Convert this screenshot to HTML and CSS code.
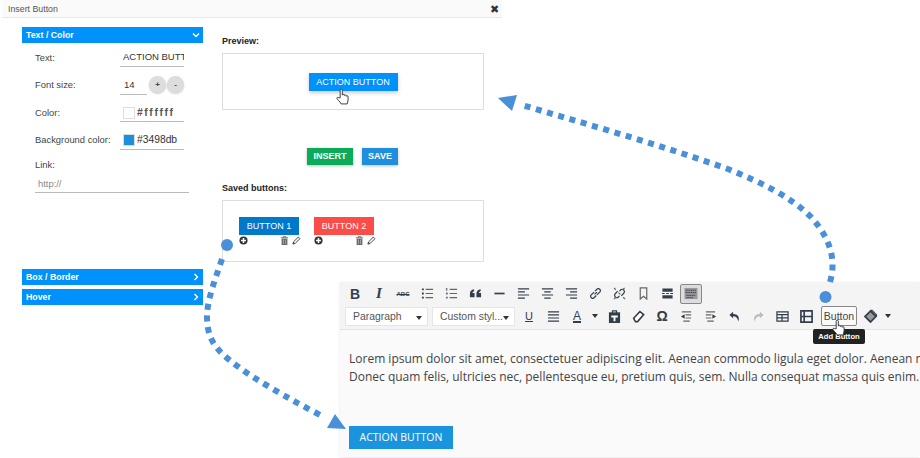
FILE: index.html
```html
<!DOCTYPE html>
<html lang="en">
<head>
    <meta charset="UTF-8">
    <title>Insert Button</title>
    <link rel="stylesheet" href="styles.css">
</head>
<body>
    <svg class="defs" width="0" height="0">
        <symbol id="hand" viewBox="0 0 14 18">
            <path d="M4.500 10.500V2.300C4.500 .6 6.800 .6 6.800 2.300V7.500C6.800 6.300 9 6.300 9 7.600V8C9 6.900 11 6.900 11 8.200V8.700C11 7.800 13 7.800 13 9.200V12.500C13 14.500 12.300 15.400 12 17H5.500C5 15.500 3.800 14.400 2.600 13.200L1.200 11.500C.4 10.300 1.800 9.300 2.900 10.200Z" fill="#fff" stroke="#333" stroke-width="1"/>
        </symbol>
        <symbol id="plus-circle" viewBox="0 0 10 10">
            <circle cx="5" cy="5" r="4.500" fill="#333"/>
            <path d="M5 2.300V7.700M2.300 5H7.700" stroke="#fff" stroke-width="1.700"/>
        </symbol>
        <symbol id="trash" viewBox="0 0 10 10">
            <path d="M1 2H9M3.500 2V.8H6.500V2" stroke="#666" fill="none"/>
            <path d="M1.800 3H8.200V10H1.800Z" fill="#666"/>
            <path d="M3.800 4V9M6.200 4V9" stroke="#ccc" stroke-width=".7"/>
        </symbol>
        <symbol id="pencil" viewBox="0 0 10 10">
            <path d="M1 9L1.700 6.500L7 1.200L8.800 3L3.500 8.300Z" fill="#fff" stroke="#444" stroke-width="1.100"/>
            <path d="M1 9L1.700 6.500L3.500 8.300Z" fill="#444"/>
        </symbol>
    </svg>

    <div class="dialog">
        <div class="dialog-title">
            <span>Insert Button</span>
            <span class="dialog-close">✖</span>
        </div>
        <div class="dialog-body">
            <div class="sidebar">
                <div class="acc-head">
                    <span>Text / Color</span>
                    <svg class="chev" viewBox="0 0 8 8"><path d="M1 2.500L4 5.500L7 2.500" /></svg>
                </div>
                <div class="acc-panel">
                    <div class="field">
                        <label>Text:</label>
                        <div class="value value-text">ACTION BUTT</div>
                    </div>
                    <div class="field">
                        <label>Font size:</label>
                        <div class="value value-size">14</div>
                        <span class="round-btn">+</span>
                        <span class="round-btn">-</span>
                    </div>
                    <div class="field">
                        <label>Color:</label>
                        <div class="value value-color"><i class="swatch swatch-white"></i><span class="mono">#ffffff</span></div>
                    </div>
                    <div class="field">
                        <label>Background color:</label>
                        <div class="value value-color"><i class="swatch swatch-blue"></i><span>#3498db</span></div>
                    </div>
                    <div class="link-label">Link:</div>
                    <div class="link-input">http://</div>
                </div>
                <div class="acc-head">
                    <span>Box / Border</span>
                    <svg class="chev" viewBox="0 0 8 8"><path d="M2.500 1L5.500 4L2.500 7" /></svg>
                </div>
                <div class="acc-head acc-last">
                    <span>Hover</span>
                    <svg class="chev" viewBox="0 0 8 8"><path d="M2.500 1L5.500 4L2.500 7" /></svg>
                </div>
            </div>

            <div class="main">
                <h4 class="block-title">Preview:</h4>
                <div class="preview-box">
                    <div class="preview-btn">ACTION BUTTON
                        <svg class="hand hand-preview"><use href="#hand"/></svg>
                    </div>
                </div>
                <div class="actions">
                    <span class="act act-insert">INSERT</span>
                    <span class="act act-save">SAVE</span>
                </div>
                <h4 class="block-title saved-title">Saved buttons:</h4>
                <div class="saved-box">
                    <div class="saved-item">
                        <div class="saved-btn saved-blue">BUTTON 1</div>
                        <div class="saved-tools">
                            <svg><use href="#plus-circle"/></svg>
                            <svg class="push"><use href="#trash"/></svg>
                            <svg><use href="#pencil"/></svg>
                        </div>
                    </div>
                    <div class="saved-item">
                        <div class="saved-btn saved-red">BUTTON 2</div>
                        <div class="saved-tools">
                            <svg><use href="#plus-circle"/></svg>
                            <svg class="push"><use href="#trash"/></svg>
                            <svg><use href="#pencil"/></svg>
                        </div>
                    </div>
                </div>
            </div>
        </div>
    </div>

    <div class="editor">
        <div class="toolbar">
            <div class="tb-row">
                <span class="tb tb-b">B</span>
                <span class="tb tb-i">I</span>
                <span class="tb tb-abc">ABC</span>
                <span class="tb"><svg viewBox="0 0 14 14"><path d="M5 2.500H13M5 7H13M5 11.500H13" class="ln dim"/><path d="M1 1.500H3V3.500H1ZM1 6H3V8H1ZM1 10.500H3V12.500H1Z" class="fl"/></svg></span>
                <span class="tb"><svg viewBox="0 0 14 14"><path d="M5 2.500H13M5 7H13M5 11.500H13" class="ln dim"/><path d="M1 1H2.500V4H1ZM1 6H3V8H1ZM1 10.500H3V12.500H1Z" class="fl thin"/></svg></span>
                <span class="tb"><svg viewBox="0 0 14 14"><path d="M1 7.500C1 4.500 2.500 3 5.500 2.500V4.500C4.500 4.800 3.700 5.500 3.700 6.500H6V11H1ZM8 7.500C8 4.500 9.500 3 12.500 2.500V4.500C11.500 4.800 10.700 5.500 10.700 6.500H13V11H8Z" class="fl"/></svg></span>
                <span class="tb"><svg viewBox="0 0 14 14"><path d="M1.500 7H12.500" class="ln thick"/></svg></span>
                <span class="tb"><svg viewBox="0 0 14 14"><path d="M1 2H13M1 5.300H8.500M1 8.600H13M1 12H8.500" class="ln"/></svg></span>
                <span class="tb"><svg viewBox="0 0 14 14"><path d="M1 2H13M3.500 5.300H10.500M1 8.600H13M3.500 12H10.500" class="ln"/></svg></span>
                <span class="tb"><svg viewBox="0 0 14 14"><path d="M1 2H13M5.500 5.300H13M1 8.600H13M5.500 12H13" class="ln"/></svg></span>
                <span class="tb"><svg viewBox="0 0 14 14"><path d="M6 8L8.500 5.500M5.500 5.500L2.200 8.800C.5 10.500 3.500 13.500 5.200 11.800L7.800 9.200M6.500 4.500L8.800 2.200C10.500 .5 13.500 3.500 11.800 5.200L8.500 8.500" class="ln"/></svg></span>
                <span class="tb"><svg viewBox="0 0 14 14"><path d="M5 4.500L2.200 7.500C.5 9.500 3.500 13 5.500 11L7 9.500M9 9.500L11.800 6.500C13.500 4.500 10.500 1 8.500 3L7 4.500" class="ln"/><path d="M1 1L3 3M13 13L11 11M1 13L3 11M12.500 1L10.500 3M6 6L8 8" class="ln dim"/></svg></span>
                <span class="tb"><svg viewBox="0 0 14 14"><path d="M3.500 1H10.500V13L7 10L3.500 13Z" class="ln dim"/></svg></span>
                <span class="tb"><svg viewBox="0 0 14 14"><path d="M1.500 1.500H12.500V5H1.500ZM1.500 9H12.500V12.500H1.500Z" class="fl"/><path d="M1 7H4M5.500 7H8.500M10 7H13" class="ln"/></svg></span>
                <span class="tb tb-on"><svg viewBox="0 0 16 14"><path d="M1 1H15V13H1Z" class="fl mid"/><path d="M2 3.500H14M2 6H14M3 9H13M3 11.500H10" class="ln dash"/></svg></span>
            </div>
            <div class="tb-row tb-row2">
                <span class="sel sel-first">Paragraph<i class="caret"></i></span>
                <span class="sel">Custom styl...<i class="caret"></i></span>
                <span class="tb tb-u">U</span>
                <span class="tb"><svg viewBox="0 0 14 14"><path d="M1 2H13M1 5.300H13M1 8.600H13M1 12H13" class="ln"/></svg></span>
                <span class="tb tb-a">A</span>
                <i class="caret caret-tb"></i>
                <span class="tb tb-paste"><svg viewBox="0 0 14 14"><path d="M1 2.500H13V14H1Z" class="fl"/><path d="M4.800 3.500V1H9.200V3.500" class="ln"/><path d="M3.500 6H10.500V8H8V12H6V8H3.500Z" class="wt"/></svg></span>
                <span class="tb"><svg viewBox="0 0 14 14"><path d="M1.800 9L8.500 1.800L12.500 5L6 12.500H3.800Z" class="ln thick"/><path d="M3 9L8.500 3.200L11 5.200L5.500 11.300H4.200Z" class="wt"/></svg></span>
                <span class="tb tb-omega">Ω</span>
                <span class="tb"><svg viewBox="0 0 14 14"><path d="M2 2H12M6 5.300H12M6 8.600H12M3.500 12H10.500" class="ln dim"/><path d="M1 7L5 4.500V9.500Z" class="fl"/></svg></span>
                <span class="tb"><svg viewBox="0 0 14 14"><path d="M2 2H12M2 5.300H8M2 8.600H8M3.500 12H10.500" class="ln dim"/><path d="M13 7L9 4.500V9.500Z" class="fl"/></svg></span>
                <span class="tb"><svg viewBox="0 0 14 14"><path d="M5.500 2L1.500 5.500L5.500 9V6.800C8.500 6.800 10.500 8.500 11 12.500C13 7.500 10.500 4.300 5.500 4.300Z" class="fl"/></svg></span>
                <span class="tb"><svg viewBox="0 0 14 14"><path d="M8.500 2L12.500 5.500L8.500 9V6.800C5.500 6.800 3.500 8.500 3 12.500C1 7.500 3.500 4.300 8.500 4.300Z" class="fl light"/></svg></span>
                <span class="tb"><svg viewBox="0 0 14 14"><path d="M1 2H13V12H1ZM1 5H13M1 8.500H13M6.500 5V12" class="ln"/></svg></span>
                <span class="tb tb-film"><svg viewBox="0 0 14 14"><path d="M1 1H13V13H1ZM1 7H13M4.500 1V13" class="ln thick"/></svg></span>
                <span class="tb-text">Button
                    <svg class="hand hand-bar"><use href="#hand"/></svg>
                    <span class="tooltip">Add Button</span>
                </span>
                <span class="tb tb-tags"><svg viewBox="0 0 16 16"><path d="M.8 8L8 .8L10 .8L15 6L15 8L8 15.200Z" class="fl"/><path d="M3.500 8L8 3.500L12.500 8L8 12.500Z" class="fl mid"/><path d="M9.500 1.500L14.500 6.500" class="ln dim"/></svg></span>
                <i class="caret caret-tb"></i>
            </div>
        </div>
        <div class="editor-body">
            <p>Lorem ipsum dolor sit amet, consectetuer adipiscing elit. Aenean commodo ligula eget dolor. Aenean massa.</p>
            <p>Donec quam felis, ultricies nec, pellentesque eu, pretium quis, sem. Nulla consequat massa quis enim. Donec.</p>
            <span class="action-btn">ACTION BUTTON</span>
        </div>
    </div>

    <!-- arrows sit over everything -->
    <svg class="arrows" viewBox="0 0 920 458">
        <circle cx="227" cy="245" r="6"/>
        <path class="dots" d="M222 259C215 280 207 300 207 317C207 345 222 355 247 373C270 388 295 402 322 416"/>
        <path d="M335 414L327 428L346 429Z"/>
        <circle cx="825.500" cy="297" r="6"/>
        <path class="dots" d="M830 282C836 262 832 240 811 217C790 196 760 182 728 169C660 145 590 125 522 105"/>
        <path d="M498 98L517 95L512 111Z"/>
    </svg>
</body>
</html>
```

FILE: styles.css
```css
* {
    margin: 0;
    padding: 0;
    box-sizing: border-box;
}

body {
    position: relative;
    width: 920px;
    height: 458px;
    overflow: hidden;
    background: #fff;
    font-family: "Liberation Sans", Arial, sans-serif;
    color: #444;
}

.defs {
    position: absolute;
}

.dialog {
    width: 500px;
    margin-left: 2px;
}

.dialog-title {
    display: flex;
    justify-content: space-between;
    align-items: center;
    height: 18px;
    padding: 0 3px 0 6px;
    background: #fafafa;
    border-bottom: 1px solid #e8e8e8;
    font-size: 8.800px;
    color: #555;
}

.dialog-close {
    font-size: 10.500px;
    color: #333;
}

.dialog-body {
    display: flex;
    padding: 9px 0 0 20px;
}

.sidebar {
    width: 181px;
}

.acc-head {
    display: flex;
    justify-content: space-between;
    align-items: center;
    height: 16px;
    padding: 0 3px 0 4px;
    background: #0091fb;
    color: #fff;
    font-size: 8.800px;
    font-weight: bold;
}

.acc-last {
    margin-top: 4px;
}

.chev {
    width: 8px;
    height: 8px;
}

.chev path {
    fill: none;
    stroke: #fff;
    stroke-width: 1.400;
}

.acc-panel {
    height: 226px;
    padding: 6px 0 0 13px;
}

.field {
    display: flex;
    align-items: center;
    height: 18px;
    margin-bottom: 9.600px;
    font-size: 9.400px;
}

.field label {
    width: 85px;
    padding-bottom: 2px;
}

.value {
    height: 18px;
    line-height: 16px;
    width: 64px;
    border-bottom: 1px solid #bbb;
    color: #333;
    font-size: 9.500px;
    overflow: hidden;
    white-space: nowrap;
}

.value-text {
    padding-left: 3px;
}

.value-size {
    width: 27px;
    padding-left: 4px;
}

.round-btn {
    display: flex;
    align-items: center;
    justify-content: center;
    width: 17px;
    height: 17px;
    margin-left: 1px;
    margin-bottom: 2px;
    border-radius: 50%;
    background: #ddd;
    box-shadow: 0 1px 2px rgba(0, 0, 0, 0.2);
    font-size: 8px;
    font-weight: bold;
}

.round-btn:first-of-type {
    margin-left: 2px;
}

.value-color {
    display: flex;
    align-items: center;
    gap: 2px;
    padding-left: 3px;
    font-size: 10.300px;
}

.mono {
    letter-spacing: 1.600px;
    font-size: 10.300px;
    font-weight: bold;
    color: #555;
}

.swatch {
    display: block;
    width: 12px;
    height: 12px;
    border: 1px solid #ddd;
}

.swatch-white {
    background: #fff;
}

.swatch-blue {
    background: #1e8fdf;
}

.link-label {
    margin-top: 3px;
    font-size: 9.400px;
}

.link-input {
    width: 154px;
    height: 17px;
    margin-top: 6px;
    padding-left: 3px;
    line-height: 16px;
    border-bottom: 1px solid #bbb;
    font-size: 9.400px;
    color: #888;
}

.main {
    width: 262px;
    margin-left: 19px;
    padding-top: 9px;
}

.block-title {
    height: 17px;
    font-size: 9px;
    font-weight: bold;
    color: #222;
}

.preview-box {
    display: flex;
    align-items: center;
    justify-content: center;
    height: 57px;
    border: 1px solid #ddd;
}

.preview-btn {
    position: relative;
    width: 89px;
    height: 18px;
    line-height: 18px;
    text-align: center;
    background: #0091fb;
    color: #fff;
    font-size: 9px;
    box-shadow: 0 2px 4px rgba(0, 0, 0, 0.2);
}

.hand {
    position: absolute;
    width: 13px;
    height: 17px;
}

.hand-preview {
    left: 27px;
    top: 15px;
}

.actions {
    display: flex;
    justify-content: center;
    gap: 9px;
    margin-top: 38px;
    padding-right: 1px;
}

.act {
    height: 17px;
    line-height: 17px;
    text-align: center;
    color: #fff;
    font-size: 9px;
    font-weight: bold;
    box-shadow: 0 1px 3px rgba(0, 0, 0, 0.25);
}

.act-insert {
    width: 46px;
    background: #0bab5a;
}

.act-save {
    width: 36px;
    background: #1e8fdf;
}

.saved-title {
    margin-top: 18px;
}

.saved-box {
    display: flex;
    gap: 15px;
    height: 62px;
    padding: 16px 0 0 16px;
    border: 1px solid #ddd;
}

.saved-item {
    width: 60px;
}

.saved-btn {
    height: 18px;
    line-height: 18px;
    text-align: center;
    color: #fff;
    font-size: 9px;
}

.saved-blue {
    background: #0179cb;
}

.saved-red {
    background: #fb4d47;
}

.saved-tools {
    display: flex;
    gap: 3px;
    margin: 1px -2px 0 0;
    padding-left: 0;
}

.saved-tools svg {
    width: 9px;
    height: 9px;
}

.saved-tools .push {
    margin-left: auto;
}

.editor {
    position: absolute;
    left: 340px;
    top: 282px;
    width: 580px;
    height: 175px;
    background: #fafafa;
    box-shadow: 0 1px 3px rgba(0, 0, 0, 0.1);
}

.toolbar {
    height: 48px;
    padding: 0 0 0 3px;
    background: #f4f4f4;
    border-bottom: 1px solid #e4e4e4;
}

.tb-row {
    display: flex;
    align-items: center;
    height: 22px;
    padding-top: 1px;
}

.tb-row2 {
    height: 22px;
    padding-top: 2px;
}

.tb {
    display: flex;
    align-items: center;
    justify-content: center;
    flex: none;
    width: 24px;
    height: 20px;
    color: #333e4d;
}

.tb svg {
    width: 13px;
    height: 13px;
}

.ln {
    fill: none;
    stroke: #333e4d;
    stroke-width: 1.300;
}

.thick {
    stroke-width: 1.800;
}

.dim {
    stroke: #666;
}

.dash {
    stroke-dasharray: 1.500 .5;
    stroke-width: 1;
}

.fl {
    fill: #333e4d;
}

.thin {
    opacity: 0.7;
}

.mid {
    fill: #999;
}

.light {
    fill: #bbb;
}

.wt {
    fill: #fff;
}

.tb-b {
    font-size: 14px;
    font-weight: bold;
}

.tb-i {
    font-family: "Liberation Serif", serif;
    font-size: 15px;
    font-style: italic;
    font-weight: bold;
}

.tb-abc {
    font-size: 6px;
    font-weight: bold;
    text-decoration: line-through;
}

.tb-on {
    width: 22px;
    margin-left: 1px;
    background: #ddd;
    border: 1px solid #888;
    border-radius: 2px;
}

.tb-on svg {
    width: 16px;
}

.sel {
    position: relative;
    display: block;
    flex: none;
    width: 83px;
    height: 19px;
    margin-right: 4px;
    padding-left: 7px;
    line-height: 17px;
    background: #fff;
    border: 1px solid #e6e6e6;
    font-size: 10.400px;
    color: #555;
}

.sel-first {
    margin-left: 2px;
}

.caret {
    display: block;
    flex: none;
    width: 0;
    height: 0;
    border-left: 3px solid transparent;
    border-right: 3px solid transparent;
    border-top: 4px solid #333;
}

.sel .caret {
    position: absolute;
    right: 5px;
    top: 8px;
}

.caret-tb {
    margin: 0 3px;
}

.tb-u {
    margin-left: -2px;
    font-size: 11px;
    text-decoration: underline;
}

.tb-a {
    width: 24px;
    font-size: 12px;
    text-decoration: underline;
    text-decoration-thickness: 2px;
}

.tb-paste {
    margin-left: 1px;
}

.tb-omega {
    font-size: 14px;
    font-weight: bold;
}

.tb-film {
    margin-right: 2px;
}

.tb-text {
    position: relative;
    flex: none;
    width: 36px;
    height: 20px;
    margin-left: 1px;
    line-height: 18px;
    text-align: center;
    border: 1px solid #888;
    border-radius: 2px;
    background: #fafafa;
    font-size: 10.500px;
    color: #444;
}

.tb-tags {
    margin-left: 1px;
}

.tb-tags svg {
    width: 15px;
    height: 15px;
}

.hand-bar {
    left: 10px;
    top: 12px;
    z-index: 2;
}

.tooltip {
    position: absolute;
    left: -9px;
    top: 22px;
    width: 52px;
    height: 15px;
    line-height: 15px;
    background: #222;
    border-radius: 2px;
    color: #fff;
    font-size: 7.600px;
    font-weight: bold;
}

.editor-body {
    padding: 20px 0 0 9px;
    overflow: hidden;
    font-family: "Open Sans", sans-serif;
    font-size: 12px;
    line-height: 18px;
    color: #444;
}

.editor-body p {
    white-space: nowrap;
}

.action-btn {
    display: block;
    width: 104px;
    height: 23px;
    margin-top: 40px;
    line-height: 23px;
    text-align: center;
    background: #1a94dc;
    color: #fff;
    font-size: 10.500px;
}

.arrows {
    position: absolute;
    left: 0;
    top: 0;
    width: 920px;
    height: 458px;
    fill: #4a90d9;
    pointer-events: none;
}

.dots {
    fill: none;
    stroke: #4a90d9;
    stroke-width: 6;
    stroke-dasharray: 6 5.700;
}
```
